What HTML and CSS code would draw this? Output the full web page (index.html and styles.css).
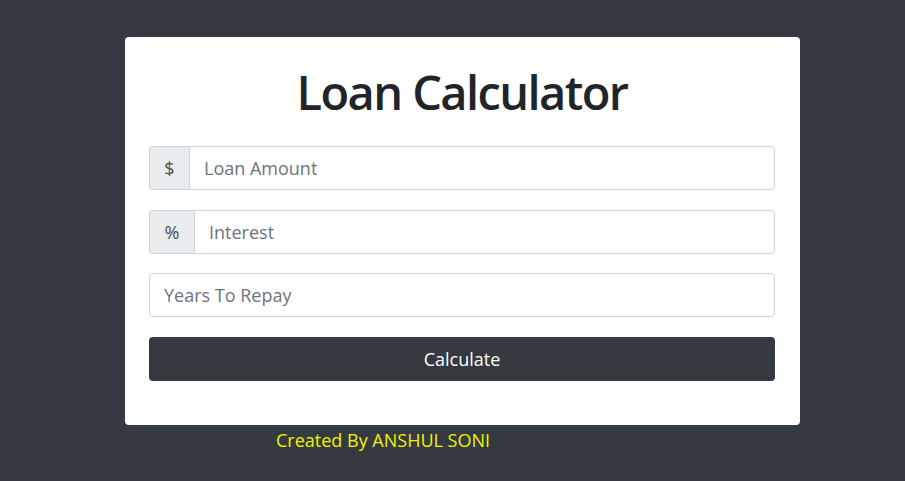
FILE: index.html
```html
<!DOCTYPE html>
<html lang="en">
<head>
<meta charset="utf-8">
<title>Loan Calculator</title>
<link rel="stylesheet" href="styles.css">
</head>
<body>
  <main class="page">
    <section class="card">
      <h1 class="title">Loan Calculator</h1>
      <form class="form">
        <div class="input-group">
          <span class="addon addon-dollar">$</span>
          <input class="field" type="text" placeholder="Loan Amount">
        </div>
        <div class="input-group">
          <span class="addon addon-percent">%</span>
          <input class="field" type="text" placeholder="Interest">
        </div>
        <div class="input-group">
          <input class="field field-solo" type="text" placeholder="Years To Repay">
        </div>
        <button class="btn" type="button">Calculate</button>
      </form>
    </section>
    <p class="credit">Created By ANSHUL SONI</p>
  </main>
</body>
</html>
```
FILE: styles.css
```css
* { box-sizing: border-box; }

html, body {
  margin: 0;
  padding: 0;
  background: #343a40;
  height: 100%;
}

body {
  font-family: "Open Sans", "Noto Sans", sans-serif;
  color: #212529;
}

.page {
  padding-top: 37px;
  padding-left: 125px;
}

.card {
  width: 675px;
  height: 388px;
  background: #fff;
  border-radius: 4px;
  padding: 25px 25px 0 24px;
}

.title {
  margin: 0 0 24px 0;
  text-align: center;
  font-size: 47px;
  line-height: 60px;
  letter-spacing: -1.6px;
  font-weight: 600;
  color: #212529;
}

.form {
  display: flex;
  flex-direction: column;
}

.input-group {
  display: flex;
  height: 44px;
  margin-bottom: 20px;
}

.input-group:nth-child(2) { margin-bottom: 19px; }

.addon {
  display: flex;
  align-items: center;
  justify-content: center;
  background: #e9ecef;
  border: 1px solid #ced4da;
  border-right: none;
  border-radius: 4px 0 0 4px;
  color: #495057;
  font-size: 18px;
}

.addon-dollar { width: 40px; }
.addon-percent { width: 45px; }

.field {
  flex: 1;
  min-width: 0;
  height: 100%;
  border: 1px solid #ced4da;
  border-radius: 0 4px 4px 0;
  padding: 0 14px;
  font-family: inherit;
  font-size: 18px;
  color: #495057;
  background: #fff;
  outline: none;
}

.field-solo {
  border-radius: 4px;
}

.field::placeholder {
  color: #6c757d;
  opacity: 1;
}

.btn {
  height: 44px;
  border: none;
  border-radius: 4px;
  background: #343a40;
  color: #fff;
  font-family: inherit;
  font-size: 18px;
  cursor: pointer;
}

.credit {
  margin: 4px 0 0 151px;
  color: #f2f200;
  font-size: 18px;
  line-height: 22px;
  font-weight: 500;
}
```
